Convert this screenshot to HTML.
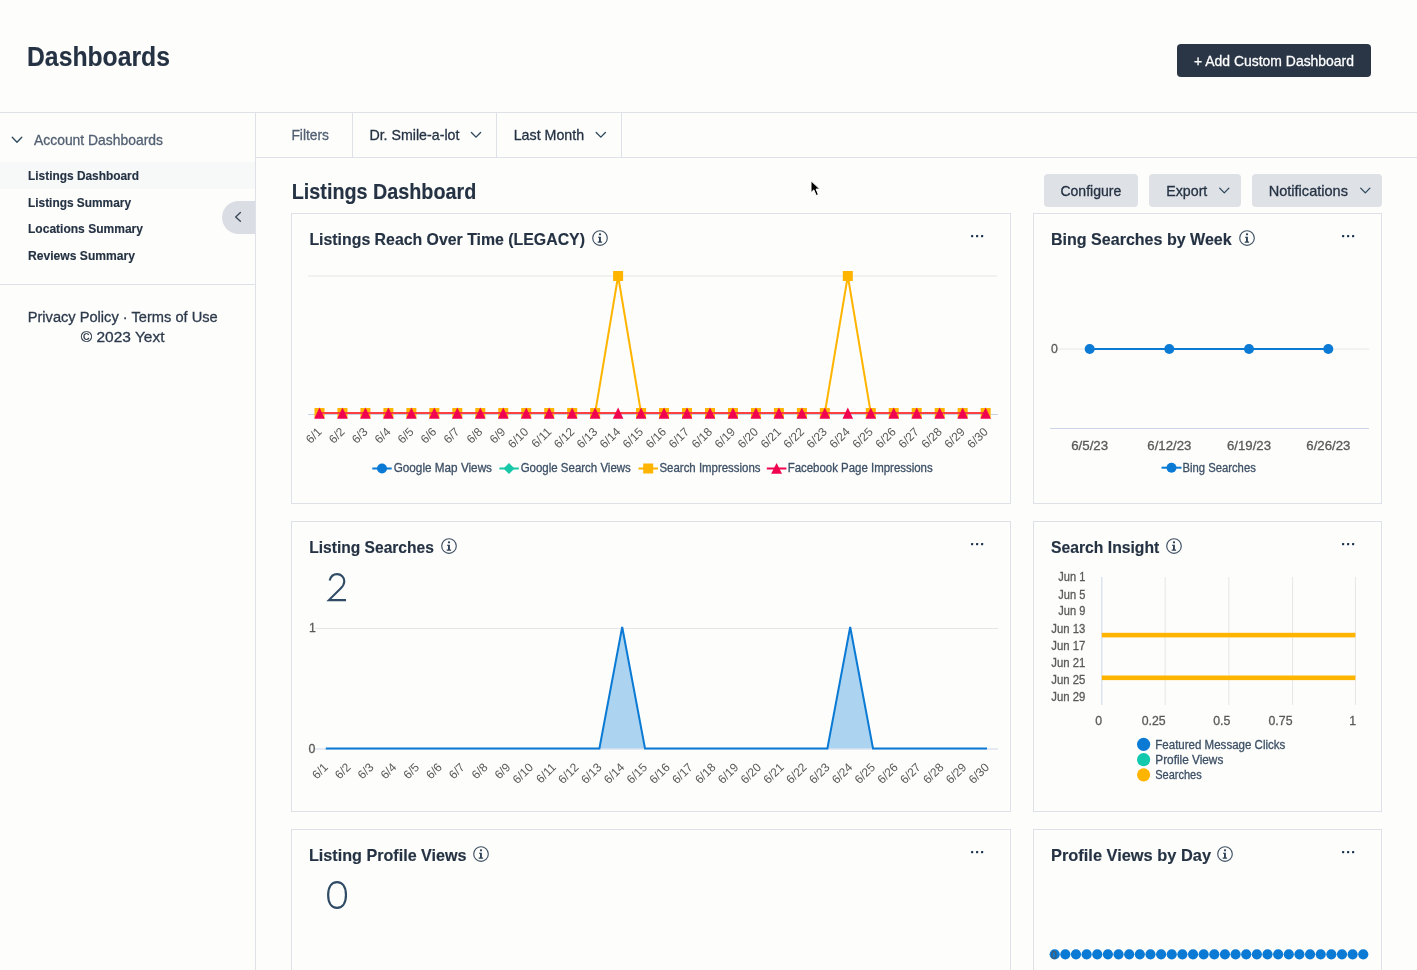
<!DOCTYPE html>
<html><head><meta charset="utf-8"><title>Dashboards</title>
<style>
*{box-sizing:border-box;margin:0;padding:0}
html,body{width:1417px;height:970px;overflow:hidden;background:#fdfdfb;font-family:"Liberation Sans",sans-serif}
.abs{position:absolute}
.hdr-line{left:0;top:112px;width:1417px;height:1px;background:#dee1e8}
.sidebar{left:0;top:113px;width:256px;height:857px;border-right:1px solid #dee1e8}
.active{left:0;top:162px;width:255px;height:27px;background:#f7f8f8}
.pill{left:222px;top:201px;width:33px;height:33px;border-radius:16.5px 0 0 16.5px;background:#dadee4}
.side-div{left:0;top:284px;width:255px;height:1px;background:#dee1e8}
.filter-line{left:256px;top:157px;width:1161px;height:1px;background:#dee1e8}
.vdiv{top:113px;width:1px;height:44px;background:#dee1e8}
.btn-dark{left:1177px;top:44px;width:194px;height:33px;border-radius:4px;background:#2a3646}
.btn{top:174px;height:33px;border-radius:4px;background:#dee1e6}
.card{border:1px solid #dee1e8;background:transparent}
svg.overlay{position:absolute;left:0;top:0;will-change:transform;font-family:"Liberation Sans",sans-serif}
</style></head><body>
<div class="abs btn-dark"></div>
<div class="abs hdr-line"></div>
<div class="abs sidebar"></div>
<div class="abs active"></div>
<div class="abs pill"></div>
<div class="abs side-div"></div>
<div class="abs filter-line"></div>
<div class="abs vdiv" style="left:352px"></div>
<div class="abs vdiv" style="left:496px"></div>
<div class="abs vdiv" style="left:621px"></div>
<div class="abs btn" style="left:1044px;width:94px"></div>
<div class="abs btn" style="left:1149px;width:92px"></div>
<div class="abs btn" style="left:1252px;width:130px"></div>
<div class="abs card" style="left:291px;top:213px;width:720px;height:291px"></div>
<div class="abs card" style="left:1033px;top:213px;width:349px;height:291px"></div>
<div class="abs card" style="left:291px;top:521px;width:720px;height:291px"></div>
<div class="abs card" style="left:1033px;top:521px;width:349px;height:291px"></div>
<div class="abs card" style="left:291px;top:829px;width:720px;height:291px"></div>
<div class="abs card" style="left:1033px;top:829px;width:349px;height:291px"></div>
<svg class="overlay" width="1417" height="970" viewBox="0 0 1417 970">
<text x="27" y="66" font-size="26.97" fill="#243243" stroke="#243243" stroke-width="0.15" font-weight="700" textLength="143" lengthAdjust="spacingAndGlyphs">Dashboards</text>
<text x="1274" y="66" font-size="15" fill="#ffffff" stroke="#ffffff" stroke-width="0.3" text-anchor="middle" textLength="160" lengthAdjust="spacingAndGlyphs">+ Add Custom Dashboard</text>
<path d="M12.25 137.3 L17 142.2 L21.75 137.3" fill="none" stroke="#2f4a5e" stroke-width="1.35" stroke-linecap="round" stroke-linejoin="round"/>
<text x="34" y="145" font-size="14.6" fill="#526072" stroke="#526072" stroke-width="0.3" textLength="129" lengthAdjust="spacingAndGlyphs">Account Dashboards</text>
<text x="28" y="180.2" font-size="12.83" fill="#243243" stroke="#243243" stroke-width="0.15" font-weight="700" textLength="111" lengthAdjust="spacingAndGlyphs">Listings Dashboard</text>
<text x="28" y="207.2" font-size="12.83" fill="#243243" stroke="#243243" stroke-width="0.15" font-weight="700" textLength="103" lengthAdjust="spacingAndGlyphs">Listings Summary</text>
<text x="28" y="232.8" font-size="12.83" fill="#243243" stroke="#243243" stroke-width="0.15" font-weight="700" textLength="115" lengthAdjust="spacingAndGlyphs">Locations Summary</text>
<text x="28" y="259.8" font-size="12.83" fill="#243243" stroke="#243243" stroke-width="0.15" font-weight="700" textLength="107" lengthAdjust="spacingAndGlyphs">Reviews Summary</text>
<path d="M240.4 212.5 L235.7 216.9 L240.4 221.3" fill="none" stroke="#3b4a5c" stroke-width="1.4" stroke-linecap="round" stroke-linejoin="round"/>
<text x="27.7" y="322" font-size="15.2" fill="#2d3a4c" stroke="#2d3a4c" stroke-width="0.3" textLength="190" lengthAdjust="spacingAndGlyphs">Privacy Policy · Terms of Use</text>
<text x="80.8" y="341.8" font-size="15.2" fill="#2d3a4c" stroke="#2d3a4c" stroke-width="0.3" textLength="83.7" lengthAdjust="spacingAndGlyphs">© 2023 Yext</text>
<text x="291.4" y="140" font-size="14.8" fill="#526072" stroke="#526072" stroke-width="0.3" textLength="37.6" lengthAdjust="spacingAndGlyphs">Filters</text>
<text x="369.4" y="140" font-size="14.8" fill="#243243" stroke="#243243" stroke-width="0.3" textLength="90" lengthAdjust="spacingAndGlyphs">Dr. Smile-a-lot</text>
<path d="M471.4 132.45000000000002 L476 137.15 L480.6 132.45000000000002" fill="none" stroke="#2f4a5e" stroke-width="1.35" stroke-linecap="round" stroke-linejoin="round"/>
<text x="513.7" y="140" font-size="14.8" fill="#243243" stroke="#243243" stroke-width="0.3" textLength="70.5" lengthAdjust="spacingAndGlyphs">Last Month</text>
<path d="M596.1999999999999 132.45000000000002 L600.8 137.15 L605.4 132.45000000000002" fill="none" stroke="#2f4a5e" stroke-width="1.35" stroke-linecap="round" stroke-linejoin="round"/>
<text x="291.8" y="199" font-size="22.32" fill="#243243" stroke="#243243" stroke-width="0.15" font-weight="700" textLength="184.4" lengthAdjust="spacingAndGlyphs">Listings Dashboard</text>
<text x="1060.4" y="196" font-size="14.8" fill="#243243" stroke="#243243" stroke-width="0.3" textLength="61" lengthAdjust="spacingAndGlyphs">Configure</text>
<text x="1166.3" y="196" font-size="14.8" fill="#243243" stroke="#243243" stroke-width="0.3" textLength="41" lengthAdjust="spacingAndGlyphs">Export</text>
<path d="M1219.7 188.15 L1224.3 192.85 L1228.8999999999999 188.15" fill="none" stroke="#2f4a5e" stroke-width="1.35" stroke-linecap="round" stroke-linejoin="round"/>
<text x="1268.7" y="196" font-size="14.8" fill="#243243" stroke="#243243" stroke-width="0.3" textLength="79.3" lengthAdjust="spacingAndGlyphs">Notifications</text>
<path d="M1360.7 188.15 L1365.3 192.85 L1369.8999999999999 188.15" fill="none" stroke="#2f4a5e" stroke-width="1.35" stroke-linecap="round" stroke-linejoin="round"/>
<text x="309.4" y="244.8" font-size="17.3" fill="#243243" stroke="#243243" stroke-width="0.15" font-weight="700" textLength="275.6" lengthAdjust="spacingAndGlyphs">Listings Reach Over Time (LEGACY)</text>
<circle cx="600" cy="238" r="7.3" fill="none" stroke="#3f5064" stroke-width="1.15"/>
<circle cx="600" cy="234.3" r="1.15" fill="#2f4257"/>
<path d="M598 236.7 L600.9 236.7 L600.9 241.6 L602.1 241.6 L602.1 242.8 L597.7 242.8 L597.7 241.6 L599.0 241.6 L599.0 237.8 L598 237.8 Z" fill="#2f4257"/>
<rect x="971" y="235" width="2.2" height="2.2" rx="0.6" fill="#1c3350"/>
<rect x="976" y="235" width="2.2" height="2.2" rx="0.6" fill="#1c3350"/>
<rect x="981" y="235" width="2.2" height="2.2" rx="0.6" fill="#1c3350"/>
<text x="1051" y="244.8" font-size="17.3" fill="#243243" stroke="#243243" stroke-width="0.15" font-weight="700" textLength="180.7" lengthAdjust="spacingAndGlyphs">Bing Searches by Week</text>
<circle cx="1247" cy="238" r="7.3" fill="none" stroke="#3f5064" stroke-width="1.15"/>
<circle cx="1247" cy="234.3" r="1.15" fill="#2f4257"/>
<path d="M1245 236.7 L1247.9 236.7 L1247.9 241.6 L1249.1 241.6 L1249.1 242.8 L1244.7 242.8 L1244.7 241.6 L1246.0 241.6 L1246.0 237.8 L1245 237.8 Z" fill="#2f4257"/>
<rect x="1342" y="235" width="2.2" height="2.2" rx="0.6" fill="#1c3350"/>
<rect x="1347" y="235" width="2.2" height="2.2" rx="0.6" fill="#1c3350"/>
<rect x="1352" y="235" width="2.2" height="2.2" rx="0.6" fill="#1c3350"/>
<text x="309.2" y="552.8" font-size="17.3" fill="#243243" stroke="#243243" stroke-width="0.15" font-weight="700" textLength="124.7" lengthAdjust="spacingAndGlyphs">Listing Searches</text>
<circle cx="449" cy="546" r="7.3" fill="none" stroke="#3f5064" stroke-width="1.15"/>
<circle cx="449" cy="542.3" r="1.15" fill="#2f4257"/>
<path d="M447 544.7 L449.9 544.7 L449.9 549.6 L451.1 549.6 L451.1 550.8 L446.7 550.8 L446.7 549.6 L448.0 549.6 L448.0 545.8 L447 545.8 Z" fill="#2f4257"/>
<rect x="971" y="543" width="2.2" height="2.2" rx="0.6" fill="#1c3350"/>
<rect x="976" y="543" width="2.2" height="2.2" rx="0.6" fill="#1c3350"/>
<rect x="981" y="543" width="2.2" height="2.2" rx="0.6" fill="#1c3350"/>
<text x="1051" y="552.8" font-size="17.3" fill="#243243" stroke="#243243" stroke-width="0.15" font-weight="700" textLength="108.3" lengthAdjust="spacingAndGlyphs">Search Insight</text>
<circle cx="1174" cy="546" r="7.3" fill="none" stroke="#3f5064" stroke-width="1.15"/>
<circle cx="1174" cy="542.3" r="1.15" fill="#2f4257"/>
<path d="M1172 544.7 L1174.9 544.7 L1174.9 549.6 L1176.1 549.6 L1176.1 550.8 L1171.7 550.8 L1171.7 549.6 L1173.0 549.6 L1173.0 545.8 L1172 545.8 Z" fill="#2f4257"/>
<rect x="1342" y="543" width="2.2" height="2.2" rx="0.6" fill="#1c3350"/>
<rect x="1347" y="543" width="2.2" height="2.2" rx="0.6" fill="#1c3350"/>
<rect x="1352" y="543" width="2.2" height="2.2" rx="0.6" fill="#1c3350"/>
<text x="309" y="861" font-size="17.3" fill="#243243" stroke="#243243" stroke-width="0.15" font-weight="700" textLength="157.6" lengthAdjust="spacingAndGlyphs">Listing Profile Views</text>
<circle cx="481" cy="854" r="7.3" fill="none" stroke="#3f5064" stroke-width="1.15"/>
<circle cx="481" cy="850.3" r="1.15" fill="#2f4257"/>
<path d="M479 852.7 L481.9 852.7 L481.9 857.6 L483.1 857.6 L483.1 858.8 L478.7 858.8 L478.7 857.6 L480.0 857.6 L480.0 853.8 L479 853.8 Z" fill="#2f4257"/>
<rect x="971" y="851" width="2.2" height="2.2" rx="0.6" fill="#1c3350"/>
<rect x="976" y="851" width="2.2" height="2.2" rx="0.6" fill="#1c3350"/>
<rect x="981" y="851" width="2.2" height="2.2" rx="0.6" fill="#1c3350"/>
<text x="1051" y="861" font-size="17.3" fill="#243243" stroke="#243243" stroke-width="0.15" font-weight="700" textLength="160" lengthAdjust="spacingAndGlyphs">Profile Views by Day</text>
<circle cx="1225" cy="854" r="7.3" fill="none" stroke="#3f5064" stroke-width="1.15"/>
<circle cx="1225" cy="850.3" r="1.15" fill="#2f4257"/>
<path d="M1223 852.7 L1225.9 852.7 L1225.9 857.6 L1227.1 857.6 L1227.1 858.8 L1222.7 858.8 L1222.7 857.6 L1224.0 857.6 L1224.0 853.8 L1223 853.8 Z" fill="#2f4257"/>
<rect x="1342" y="851" width="2.2" height="2.2" rx="0.6" fill="#1c3350"/>
<rect x="1347" y="851" width="2.2" height="2.2" rx="0.6" fill="#1c3350"/>
<rect x="1352" y="851" width="2.2" height="2.2" rx="0.6" fill="#1c3350"/>
<line x1="308" y1="276" x2="997" y2="276" stroke="#e6e6e6" stroke-width="1"/>
<line x1="308" y1="414.5" x2="998" y2="414.5" stroke="#c6d3e6" stroke-width="1"/>
<polyline points="319.50,413 342.47,413 365.44,413 388.41,413 411.38,413 434.35,413 457.32,413 480.29,413 503.26,413 526.23,413 549.20,413 572.17,413 595.14,413 618.11,276 641.08,413 664.05,413 687.02,413 709.99,413 732.96,413 755.93,413 778.90,413 801.87,413 824.84,413 847.81,276 870.78,413 893.75,413 916.72,413 939.69,413 962.66,413 985.63,413" fill="none" stroke="#ffb400" stroke-width="2"/>
<rect x="314.50" y="408" width="10" height="10" fill="#ffb400"/>
<rect x="337.47" y="408" width="10" height="10" fill="#ffb400"/>
<rect x="360.44" y="408" width="10" height="10" fill="#ffb400"/>
<rect x="383.41" y="408" width="10" height="10" fill="#ffb400"/>
<rect x="406.38" y="408" width="10" height="10" fill="#ffb400"/>
<rect x="429.35" y="408" width="10" height="10" fill="#ffb400"/>
<rect x="452.32" y="408" width="10" height="10" fill="#ffb400"/>
<rect x="475.29" y="408" width="10" height="10" fill="#ffb400"/>
<rect x="498.26" y="408" width="10" height="10" fill="#ffb400"/>
<rect x="521.23" y="408" width="10" height="10" fill="#ffb400"/>
<rect x="544.20" y="408" width="10" height="10" fill="#ffb400"/>
<rect x="567.17" y="408" width="10" height="10" fill="#ffb400"/>
<rect x="590.14" y="408" width="10" height="10" fill="#ffb400"/>
<rect x="613.11" y="271" width="10" height="10" fill="#ffb400"/>
<rect x="636.08" y="408" width="10" height="10" fill="#ffb400"/>
<rect x="659.05" y="408" width="10" height="10" fill="#ffb400"/>
<rect x="682.02" y="408" width="10" height="10" fill="#ffb400"/>
<rect x="704.99" y="408" width="10" height="10" fill="#ffb400"/>
<rect x="727.96" y="408" width="10" height="10" fill="#ffb400"/>
<rect x="750.93" y="408" width="10" height="10" fill="#ffb400"/>
<rect x="773.90" y="408" width="10" height="10" fill="#ffb400"/>
<rect x="796.87" y="408" width="10" height="10" fill="#ffb400"/>
<rect x="819.84" y="408" width="10" height="10" fill="#ffb400"/>
<rect x="842.81" y="271" width="10" height="10" fill="#ffb400"/>
<rect x="865.78" y="408" width="10" height="10" fill="#ffb400"/>
<rect x="888.75" y="408" width="10" height="10" fill="#ffb400"/>
<rect x="911.72" y="408" width="10" height="10" fill="#ffb400"/>
<rect x="934.69" y="408" width="10" height="10" fill="#ffb400"/>
<rect x="957.66" y="408" width="10" height="10" fill="#ffb400"/>
<rect x="980.63" y="408" width="10" height="10" fill="#ffb400"/>
<line x1="319.5" y1="413" x2="985.63" y2="413" stroke="#ff4040" stroke-width="2"/>
<path d="M319.50 407.5 L324.80 418.8 L314.20 418.8 Z" fill="#f0034f"/>
<path d="M342.47 407.5 L347.77 418.8 L337.17 418.8 Z" fill="#f0034f"/>
<path d="M365.44 407.5 L370.74 418.8 L360.14 418.8 Z" fill="#f0034f"/>
<path d="M388.41 407.5 L393.71 418.8 L383.11 418.8 Z" fill="#f0034f"/>
<path d="M411.38 407.5 L416.68 418.8 L406.08 418.8 Z" fill="#f0034f"/>
<path d="M434.35 407.5 L439.65 418.8 L429.05 418.8 Z" fill="#f0034f"/>
<path d="M457.32 407.5 L462.62 418.8 L452.02 418.8 Z" fill="#f0034f"/>
<path d="M480.29 407.5 L485.59 418.8 L474.99 418.8 Z" fill="#f0034f"/>
<path d="M503.26 407.5 L508.56 418.8 L497.96 418.8 Z" fill="#f0034f"/>
<path d="M526.23 407.5 L531.53 418.8 L520.93 418.8 Z" fill="#f0034f"/>
<path d="M549.20 407.5 L554.50 418.8 L543.90 418.8 Z" fill="#f0034f"/>
<path d="M572.17 407.5 L577.47 418.8 L566.87 418.8 Z" fill="#f0034f"/>
<path d="M595.14 407.5 L600.44 418.8 L589.84 418.8 Z" fill="#f0034f"/>
<path d="M618.11 407.5 L623.41 418.8 L612.81 418.8 Z" fill="#f0034f"/>
<path d="M641.08 407.5 L646.38 418.8 L635.78 418.8 Z" fill="#f0034f"/>
<path d="M664.05 407.5 L669.35 418.8 L658.75 418.8 Z" fill="#f0034f"/>
<path d="M687.02 407.5 L692.32 418.8 L681.72 418.8 Z" fill="#f0034f"/>
<path d="M709.99 407.5 L715.29 418.8 L704.69 418.8 Z" fill="#f0034f"/>
<path d="M732.96 407.5 L738.26 418.8 L727.66 418.8 Z" fill="#f0034f"/>
<path d="M755.93 407.5 L761.23 418.8 L750.63 418.8 Z" fill="#f0034f"/>
<path d="M778.90 407.5 L784.20 418.8 L773.60 418.8 Z" fill="#f0034f"/>
<path d="M801.87 407.5 L807.17 418.8 L796.57 418.8 Z" fill="#f0034f"/>
<path d="M824.84 407.5 L830.14 418.8 L819.54 418.8 Z" fill="#f0034f"/>
<path d="M847.81 407.5 L853.11 418.8 L842.51 418.8 Z" fill="#f0034f"/>
<path d="M870.78 407.5 L876.08 418.8 L865.48 418.8 Z" fill="#f0034f"/>
<path d="M893.75 407.5 L899.05 418.8 L888.45 418.8 Z" fill="#f0034f"/>
<path d="M916.72 407.5 L922.02 418.8 L911.42 418.8 Z" fill="#f0034f"/>
<path d="M939.69 407.5 L944.99 418.8 L934.39 418.8 Z" fill="#f0034f"/>
<path d="M962.66 407.5 L967.96 418.8 L957.36 418.8 Z" fill="#f0034f"/>
<path d="M985.63 407.5 L990.93 418.8 L980.33 418.8 Z" fill="#f0034f"/>
<text x="322.50" y="432.5" font-size="12" fill="#5a5a5a" text-anchor="end" transform="rotate(-45 322.50 432.5)">6/1</text>
<text x="345.47" y="432.5" font-size="12" fill="#5a5a5a" text-anchor="end" transform="rotate(-45 345.47 432.5)">6/2</text>
<text x="368.44" y="432.5" font-size="12" fill="#5a5a5a" text-anchor="end" transform="rotate(-45 368.44 432.5)">6/3</text>
<text x="391.41" y="432.5" font-size="12" fill="#5a5a5a" text-anchor="end" transform="rotate(-45 391.41 432.5)">6/4</text>
<text x="414.38" y="432.5" font-size="12" fill="#5a5a5a" text-anchor="end" transform="rotate(-45 414.38 432.5)">6/5</text>
<text x="437.35" y="432.5" font-size="12" fill="#5a5a5a" text-anchor="end" transform="rotate(-45 437.35 432.5)">6/6</text>
<text x="460.32" y="432.5" font-size="12" fill="#5a5a5a" text-anchor="end" transform="rotate(-45 460.32 432.5)">6/7</text>
<text x="483.29" y="432.5" font-size="12" fill="#5a5a5a" text-anchor="end" transform="rotate(-45 483.29 432.5)">6/8</text>
<text x="506.26" y="432.5" font-size="12" fill="#5a5a5a" text-anchor="end" transform="rotate(-45 506.26 432.5)">6/9</text>
<text x="529.23" y="432.5" font-size="12" fill="#5a5a5a" text-anchor="end" transform="rotate(-45 529.23 432.5)">6/10</text>
<text x="552.20" y="432.5" font-size="12" fill="#5a5a5a" text-anchor="end" transform="rotate(-45 552.20 432.5)">6/11</text>
<text x="575.17" y="432.5" font-size="12" fill="#5a5a5a" text-anchor="end" transform="rotate(-45 575.17 432.5)">6/12</text>
<text x="598.14" y="432.5" font-size="12" fill="#5a5a5a" text-anchor="end" transform="rotate(-45 598.14 432.5)">6/13</text>
<text x="621.11" y="432.5" font-size="12" fill="#5a5a5a" text-anchor="end" transform="rotate(-45 621.11 432.5)">6/14</text>
<text x="644.08" y="432.5" font-size="12" fill="#5a5a5a" text-anchor="end" transform="rotate(-45 644.08 432.5)">6/15</text>
<text x="667.05" y="432.5" font-size="12" fill="#5a5a5a" text-anchor="end" transform="rotate(-45 667.05 432.5)">6/16</text>
<text x="690.02" y="432.5" font-size="12" fill="#5a5a5a" text-anchor="end" transform="rotate(-45 690.02 432.5)">6/17</text>
<text x="712.99" y="432.5" font-size="12" fill="#5a5a5a" text-anchor="end" transform="rotate(-45 712.99 432.5)">6/18</text>
<text x="735.96" y="432.5" font-size="12" fill="#5a5a5a" text-anchor="end" transform="rotate(-45 735.96 432.5)">6/19</text>
<text x="758.93" y="432.5" font-size="12" fill="#5a5a5a" text-anchor="end" transform="rotate(-45 758.93 432.5)">6/20</text>
<text x="781.90" y="432.5" font-size="12" fill="#5a5a5a" text-anchor="end" transform="rotate(-45 781.90 432.5)">6/21</text>
<text x="804.87" y="432.5" font-size="12" fill="#5a5a5a" text-anchor="end" transform="rotate(-45 804.87 432.5)">6/22</text>
<text x="827.84" y="432.5" font-size="12" fill="#5a5a5a" text-anchor="end" transform="rotate(-45 827.84 432.5)">6/23</text>
<text x="850.81" y="432.5" font-size="12" fill="#5a5a5a" text-anchor="end" transform="rotate(-45 850.81 432.5)">6/24</text>
<text x="873.78" y="432.5" font-size="12" fill="#5a5a5a" text-anchor="end" transform="rotate(-45 873.78 432.5)">6/25</text>
<text x="896.75" y="432.5" font-size="12" fill="#5a5a5a" text-anchor="end" transform="rotate(-45 896.75 432.5)">6/26</text>
<text x="919.72" y="432.5" font-size="12" fill="#5a5a5a" text-anchor="end" transform="rotate(-45 919.72 432.5)">6/27</text>
<text x="942.69" y="432.5" font-size="12" fill="#5a5a5a" text-anchor="end" transform="rotate(-45 942.69 432.5)">6/28</text>
<text x="965.66" y="432.5" font-size="12" fill="#5a5a5a" text-anchor="end" transform="rotate(-45 965.66 432.5)">6/29</text>
<text x="988.63" y="432.5" font-size="12" fill="#5a5a5a" text-anchor="end" transform="rotate(-45 988.63 432.5)">6/30</text>
<line x1="372.3" y1="468.5" x2="391.7" y2="468.5" stroke="#0a7ad4" stroke-width="2"/>
<circle cx="382" cy="468.5" r="5" fill="#0a7ad4"/>
<text x="393.7" y="472.4" font-size="12.3" fill="#3d5066" stroke="#3d5066" stroke-width="0.3" textLength="98.3" lengthAdjust="spacingAndGlyphs">Google Map Views</text>
<line x1="499.4" y1="468.5" x2="518.8" y2="468.5" stroke="#17c8a8" stroke-width="2"/>
<path d="M509 463.0 L514.5 468.5 L509 474.0 L503.5 468.5 Z" fill="#17c8a8"/>
<text x="520.7" y="472.4" font-size="12.3" fill="#3d5066" stroke="#3d5066" stroke-width="0.3" textLength="110.1" lengthAdjust="spacingAndGlyphs">Google Search Views</text>
<line x1="638.5" y1="468.5" x2="658" y2="468.5" stroke="#ffb400" stroke-width="2"/>
<rect x="643.2" y="463.5" width="10" height="10" fill="#ffb400"/>
<text x="659.5" y="472.4" font-size="12.3" fill="#3d5066" stroke="#3d5066" stroke-width="0.3" textLength="101" lengthAdjust="spacingAndGlyphs">Search Impressions</text>
<line x1="766.8" y1="468.5" x2="786.4" y2="468.5" stroke="#f0034f" stroke-width="2"/>
<path d="M776.6 463.0 L782 473.8 L771.2 473.8 Z" fill="#f0034f"/>
<text x="787.7" y="472.4" font-size="12.3" fill="#3d5066" stroke="#3d5066" stroke-width="0.3" textLength="145" lengthAdjust="spacingAndGlyphs">Facebook Page Impressions</text>
<line x1="1058" y1="349" x2="1369" y2="349" stroke="#e6e6e6" stroke-width="1"/>
<line x1="1050" y1="428.5" x2="1369" y2="428.5" stroke="#ccd6eb" stroke-width="1"/>
<text x="1051" y="353" font-size="12.3" fill="#5a5a5a" stroke="#5a5a5a" stroke-width="0.3">0</text>
<polyline points="1089.7,349 1169.3,349 1249,349 1328.3,349" fill="none" stroke="#0a7ad4" stroke-width="2"/>
<circle cx="1089.7" cy="349" r="5" fill="#0a7ad4"/>
<circle cx="1169.3" cy="349" r="5" fill="#0a7ad4"/>
<circle cx="1249" cy="349" r="5" fill="#0a7ad4"/>
<circle cx="1328.3" cy="349" r="5" fill="#0a7ad4"/>
<text x="1071.2" y="450" font-size="12.3" fill="#5a5a5a" stroke="#5a5a5a" stroke-width="0.3" textLength="37" lengthAdjust="spacingAndGlyphs">6/5/23</text>
<text x="1147.3" y="450" font-size="12.3" fill="#5a5a5a" stroke="#5a5a5a" stroke-width="0.3" textLength="44" lengthAdjust="spacingAndGlyphs">6/12/23</text>
<text x="1227.0" y="450" font-size="12.3" fill="#5a5a5a" stroke="#5a5a5a" stroke-width="0.3" textLength="44" lengthAdjust="spacingAndGlyphs">6/19/23</text>
<text x="1306.3" y="450" font-size="12.3" fill="#5a5a5a" stroke="#5a5a5a" stroke-width="0.3" textLength="44" lengthAdjust="spacingAndGlyphs">6/26/23</text>
<line x1="1161.5" y1="467.7" x2="1181.5" y2="467.7" stroke="#0a7ad4" stroke-width="2"/>
<circle cx="1171.5" cy="467.7" r="5" fill="#0a7ad4"/>
<text x="1182.5" y="472" font-size="12.3" fill="#3d5066" stroke="#3d5066" stroke-width="0.3" textLength="73.3" lengthAdjust="spacingAndGlyphs">Bing Searches</text>
<path d="M329.6 580.6 C330.6 576.6 333.6 574.1 337.1 574.1 C341.3 574.1 344.3 577.2 344.3 581.2 C344.3 584 343 586.2 340.6 588.5 L328.9 600.1 L346 600.1" fill="none" stroke="#2f4b65" stroke-width="2.1"/>
<line x1="315" y1="628.5" x2="998" y2="628.5" stroke="#e6e6e6" stroke-width="1"/>
<line x1="315" y1="749" x2="998" y2="749" stroke="#ccd6eb" stroke-width="1"/>
<text x="309" y="632" font-size="12.3" fill="#5a5a5a" stroke="#5a5a5a" stroke-width="0.3">1</text>
<text x="308.5" y="753" font-size="12.3" fill="#5a5a5a" stroke="#5a5a5a" stroke-width="0.3">0</text>
<path d="M325.80 748.5 L348.60 748.5 L371.40 748.5 L394.20 748.5 L417.00 748.5 L439.80 748.5 L462.60 748.5 L485.40 748.5 L508.20 748.5 L531.00 748.5 L553.80 748.5 L576.60 748.5 L599.40 748.5 L622.20 627 L645.00 748.5 L667.80 748.5 L690.60 748.5 L713.40 748.5 L736.20 748.5 L759.00 748.5 L781.80 748.5 L804.60 748.5 L827.40 748.5 L850.20 627 L873.00 748.5 L895.80 748.5 L918.60 748.5 L941.40 748.5 L964.20 748.5 L987.00 748.5 L987.00 748.5 L325.80 748.5 Z" fill="#acd4f0"/>
<polyline points="325.80,748.5 348.60,748.5 371.40,748.5 394.20,748.5 417.00,748.5 439.80,748.5 462.60,748.5 485.40,748.5 508.20,748.5 531.00,748.5 553.80,748.5 576.60,748.5 599.40,748.5 622.20,627 645.00,748.5 667.80,748.5 690.60,748.5 713.40,748.5 736.20,748.5 759.00,748.5 781.80,748.5 804.60,748.5 827.40,748.5 850.20,627 873.00,748.5 895.80,748.5 918.60,748.5 941.40,748.5 964.20,748.5 987.00,748.5" fill="none" stroke="#0a7ad4" stroke-width="2" stroke-linejoin="miter"/>
<text x="328.80" y="768" font-size="12" fill="#5a5a5a" text-anchor="end" transform="rotate(-45 328.80 768)">6/1</text>
<text x="351.60" y="768" font-size="12" fill="#5a5a5a" text-anchor="end" transform="rotate(-45 351.60 768)">6/2</text>
<text x="374.40" y="768" font-size="12" fill="#5a5a5a" text-anchor="end" transform="rotate(-45 374.40 768)">6/3</text>
<text x="397.20" y="768" font-size="12" fill="#5a5a5a" text-anchor="end" transform="rotate(-45 397.20 768)">6/4</text>
<text x="420.00" y="768" font-size="12" fill="#5a5a5a" text-anchor="end" transform="rotate(-45 420.00 768)">6/5</text>
<text x="442.80" y="768" font-size="12" fill="#5a5a5a" text-anchor="end" transform="rotate(-45 442.80 768)">6/6</text>
<text x="465.60" y="768" font-size="12" fill="#5a5a5a" text-anchor="end" transform="rotate(-45 465.60 768)">6/7</text>
<text x="488.40" y="768" font-size="12" fill="#5a5a5a" text-anchor="end" transform="rotate(-45 488.40 768)">6/8</text>
<text x="511.20" y="768" font-size="12" fill="#5a5a5a" text-anchor="end" transform="rotate(-45 511.20 768)">6/9</text>
<text x="534.00" y="768" font-size="12" fill="#5a5a5a" text-anchor="end" transform="rotate(-45 534.00 768)">6/10</text>
<text x="556.80" y="768" font-size="12" fill="#5a5a5a" text-anchor="end" transform="rotate(-45 556.80 768)">6/11</text>
<text x="579.60" y="768" font-size="12" fill="#5a5a5a" text-anchor="end" transform="rotate(-45 579.60 768)">6/12</text>
<text x="602.40" y="768" font-size="12" fill="#5a5a5a" text-anchor="end" transform="rotate(-45 602.40 768)">6/13</text>
<text x="625.20" y="768" font-size="12" fill="#5a5a5a" text-anchor="end" transform="rotate(-45 625.20 768)">6/14</text>
<text x="648.00" y="768" font-size="12" fill="#5a5a5a" text-anchor="end" transform="rotate(-45 648.00 768)">6/15</text>
<text x="670.80" y="768" font-size="12" fill="#5a5a5a" text-anchor="end" transform="rotate(-45 670.80 768)">6/16</text>
<text x="693.60" y="768" font-size="12" fill="#5a5a5a" text-anchor="end" transform="rotate(-45 693.60 768)">6/17</text>
<text x="716.40" y="768" font-size="12" fill="#5a5a5a" text-anchor="end" transform="rotate(-45 716.40 768)">6/18</text>
<text x="739.20" y="768" font-size="12" fill="#5a5a5a" text-anchor="end" transform="rotate(-45 739.20 768)">6/19</text>
<text x="762.00" y="768" font-size="12" fill="#5a5a5a" text-anchor="end" transform="rotate(-45 762.00 768)">6/20</text>
<text x="784.80" y="768" font-size="12" fill="#5a5a5a" text-anchor="end" transform="rotate(-45 784.80 768)">6/21</text>
<text x="807.60" y="768" font-size="12" fill="#5a5a5a" text-anchor="end" transform="rotate(-45 807.60 768)">6/22</text>
<text x="830.40" y="768" font-size="12" fill="#5a5a5a" text-anchor="end" transform="rotate(-45 830.40 768)">6/23</text>
<text x="853.20" y="768" font-size="12" fill="#5a5a5a" text-anchor="end" transform="rotate(-45 853.20 768)">6/24</text>
<text x="876.00" y="768" font-size="12" fill="#5a5a5a" text-anchor="end" transform="rotate(-45 876.00 768)">6/25</text>
<text x="898.80" y="768" font-size="12" fill="#5a5a5a" text-anchor="end" transform="rotate(-45 898.80 768)">6/26</text>
<text x="921.60" y="768" font-size="12" fill="#5a5a5a" text-anchor="end" transform="rotate(-45 921.60 768)">6/27</text>
<text x="944.40" y="768" font-size="12" fill="#5a5a5a" text-anchor="end" transform="rotate(-45 944.40 768)">6/28</text>
<text x="967.20" y="768" font-size="12" fill="#5a5a5a" text-anchor="end" transform="rotate(-45 967.20 768)">6/29</text>
<text x="990.00" y="768" font-size="12" fill="#5a5a5a" text-anchor="end" transform="rotate(-45 990.00 768)">6/30</text>
<line x1="1101.8" y1="577" x2="1101.8" y2="705" stroke="#ccd6eb" stroke-width="1"/>
<line x1="1165.2" y1="577" x2="1165.2" y2="705" stroke="#e6e6e6" stroke-width="1"/>
<line x1="1228.9" y1="577" x2="1228.9" y2="705" stroke="#e6e6e6" stroke-width="1"/>
<line x1="1292.6" y1="577" x2="1292.6" y2="705" stroke="#e6e6e6" stroke-width="1"/>
<line x1="1355.4" y1="577" x2="1355.4" y2="705" stroke="#e6e6e6" stroke-width="1"/>
<text x="1058.3" y="581.4000000000001" font-size="12.3" fill="#5a5a5a" stroke="#5a5a5a" stroke-width="0.3" textLength="27" lengthAdjust="spacingAndGlyphs">Jun 1</text>
<text x="1058.3" y="599.1" font-size="12.3" fill="#5a5a5a" stroke="#5a5a5a" stroke-width="0.3" textLength="27" lengthAdjust="spacingAndGlyphs">Jun 5</text>
<text x="1058.3" y="615.4000000000001" font-size="12.3" fill="#5a5a5a" stroke="#5a5a5a" stroke-width="0.3" textLength="27" lengthAdjust="spacingAndGlyphs">Jun 9</text>
<text x="1051.3" y="633.1" font-size="12.3" fill="#5a5a5a" stroke="#5a5a5a" stroke-width="0.3" textLength="34" lengthAdjust="spacingAndGlyphs">Jun 13</text>
<text x="1051.3" y="650.1" font-size="12.3" fill="#5a5a5a" stroke="#5a5a5a" stroke-width="0.3" textLength="34" lengthAdjust="spacingAndGlyphs">Jun 17</text>
<text x="1051.3" y="667.1" font-size="12.3" fill="#5a5a5a" stroke="#5a5a5a" stroke-width="0.3" textLength="34" lengthAdjust="spacingAndGlyphs">Jun 21</text>
<text x="1051.3" y="684.1" font-size="12.3" fill="#5a5a5a" stroke="#5a5a5a" stroke-width="0.3" textLength="34" lengthAdjust="spacingAndGlyphs">Jun 25</text>
<text x="1051.3" y="701.1" font-size="12.3" fill="#5a5a5a" stroke="#5a5a5a" stroke-width="0.3" textLength="34" lengthAdjust="spacingAndGlyphs">Jun 29</text>
<rect x="1101.8" y="632.8" width="253.6" height="4.6" fill="#ffb400"/>
<rect x="1101.8" y="675.5" width="253.6" height="4.6" fill="#ffb400"/>
<text x="1098.7" y="725.2" font-size="12.3" fill="#5a5a5a" stroke="#5a5a5a" stroke-width="0.3" text-anchor="middle">0</text>
<text x="1153.7" y="725.2" font-size="12.3" fill="#5a5a5a" stroke="#5a5a5a" stroke-width="0.3" text-anchor="middle">0.25</text>
<text x="1221.8" y="725.2" font-size="12.3" fill="#5a5a5a" stroke="#5a5a5a" stroke-width="0.3" text-anchor="middle">0.5</text>
<text x="1280.5" y="725.2" font-size="12.3" fill="#5a5a5a" stroke="#5a5a5a" stroke-width="0.3" text-anchor="middle">0.75</text>
<text x="1352.6" y="725.2" font-size="12.3" fill="#5a5a5a" stroke="#5a5a5a" stroke-width="0.3" text-anchor="middle">1</text>
<circle cx="1143.6" cy="744.3" r="6.6" fill="#0a7ad4"/>
<text x="1155.3" y="748.5" font-size="12.3" fill="#3d5066" stroke="#3d5066" stroke-width="0.3" textLength="130" lengthAdjust="spacingAndGlyphs">Featured Message Clicks</text>
<circle cx="1143.6" cy="759.6" r="6.6" fill="#12c9ae"/>
<text x="1155.3" y="763.8000000000001" font-size="12.3" fill="#3d5066" stroke="#3d5066" stroke-width="0.3" textLength="68" lengthAdjust="spacingAndGlyphs">Profile Views</text>
<circle cx="1143.6" cy="774.8" r="6.6" fill="#ffb400"/>
<text x="1155.3" y="779.0" font-size="12.3" fill="#3d5066" stroke="#3d5066" stroke-width="0.3" textLength="46.4" lengthAdjust="spacingAndGlyphs">Searches</text>
<path d="M337.06 882.2 C342.58 882.2 345.96 887.06 345.96 895 C345.96 902.94 342.58 907.8 337.06 907.8 C331.54 907.8 328.16 902.94 328.16 895 C328.16 887.06 331.54 882.2 337.06 882.2 Z" fill="none" stroke="#2f4b65" stroke-width="2.2"/>
<circle cx="1054.70" cy="954.3" r="5.1" fill="#0a7ad4"/>
<circle cx="1065.34" cy="954.3" r="5.1" fill="#0a7ad4"/>
<circle cx="1075.98" cy="954.3" r="5.1" fill="#0a7ad4"/>
<circle cx="1086.62" cy="954.3" r="5.1" fill="#0a7ad4"/>
<circle cx="1097.26" cy="954.3" r="5.1" fill="#0a7ad4"/>
<circle cx="1107.90" cy="954.3" r="5.1" fill="#0a7ad4"/>
<circle cx="1118.54" cy="954.3" r="5.1" fill="#0a7ad4"/>
<circle cx="1129.18" cy="954.3" r="5.1" fill="#0a7ad4"/>
<circle cx="1139.82" cy="954.3" r="5.1" fill="#0a7ad4"/>
<circle cx="1150.46" cy="954.3" r="5.1" fill="#0a7ad4"/>
<circle cx="1161.10" cy="954.3" r="5.1" fill="#0a7ad4"/>
<circle cx="1171.74" cy="954.3" r="5.1" fill="#0a7ad4"/>
<circle cx="1182.38" cy="954.3" r="5.1" fill="#0a7ad4"/>
<circle cx="1193.02" cy="954.3" r="5.1" fill="#0a7ad4"/>
<circle cx="1203.66" cy="954.3" r="5.1" fill="#0a7ad4"/>
<circle cx="1214.30" cy="954.3" r="5.1" fill="#0a7ad4"/>
<circle cx="1224.94" cy="954.3" r="5.1" fill="#0a7ad4"/>
<circle cx="1235.58" cy="954.3" r="5.1" fill="#0a7ad4"/>
<circle cx="1246.22" cy="954.3" r="5.1" fill="#0a7ad4"/>
<circle cx="1256.86" cy="954.3" r="5.1" fill="#0a7ad4"/>
<circle cx="1267.50" cy="954.3" r="5.1" fill="#0a7ad4"/>
<circle cx="1278.14" cy="954.3" r="5.1" fill="#0a7ad4"/>
<circle cx="1288.78" cy="954.3" r="5.1" fill="#0a7ad4"/>
<circle cx="1299.42" cy="954.3" r="5.1" fill="#0a7ad4"/>
<circle cx="1310.06" cy="954.3" r="5.1" fill="#0a7ad4"/>
<circle cx="1320.70" cy="954.3" r="5.1" fill="#0a7ad4"/>
<circle cx="1331.34" cy="954.3" r="5.1" fill="#0a7ad4"/>
<circle cx="1341.98" cy="954.3" r="5.1" fill="#0a7ad4"/>
<circle cx="1352.62" cy="954.3" r="5.1" fill="#0a7ad4"/>
<circle cx="1363.26" cy="954.3" r="5.1" fill="#0a7ad4"/>
<text x="1051" y="958.5" font-size="10.5" fill="#555555" stroke="#555555" stroke-width="0.3" fill-opacity="0.8">0</text>
<path d="M811 180.8 L811 192.6 L813.8 189.9 L816.2 195.5 L818.4 194.6 L816.1 189.1 L819.8 189.1 Z" fill="#000" stroke="#fff" stroke-width="1"/>
</svg>
</body></html>
